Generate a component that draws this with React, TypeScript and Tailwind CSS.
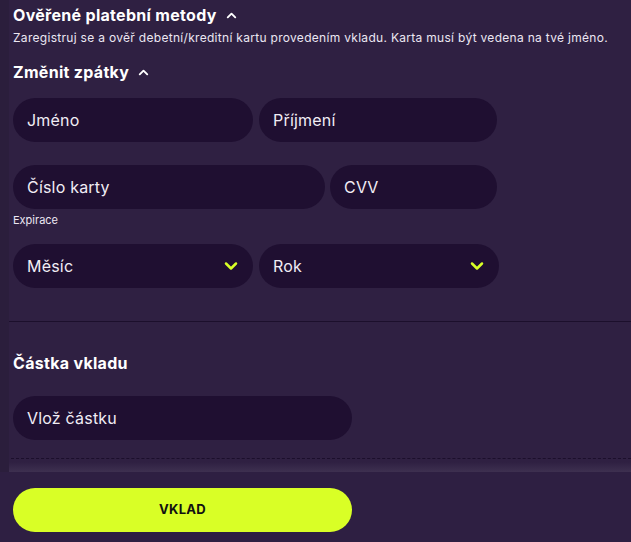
import { ChevronDown, ChevronUp } from 'lucide-react'

function Field({ label, className = '' }: { label: string; className?: string }) {
    return (
        <div className={`h-[44px] rounded-full bg-[#1f0f31] flex items-center pl-[14px] text-[16px] tracking-[0.2px] text-[#f1edf5] ${className}`}>
            {label}
        </div>
    )
}

function Select({ label }: { label: string }) {
    return (
        <div className="h-[44px] w-[240px] rounded-full bg-[#1f0f31] flex items-center justify-between pl-[14px] pr-[12px] text-[16px] tracking-[0.2px] text-[#f1edf5]">
            {label}
            <ChevronDown size={20} strokeWidth={3} className="text-[#d8ff26]" />
        </div>
    )
}

export default function App() {
    return (
        <div
            className="w-[631px] h-[542px] bg-[#2f2042] flex flex-col overflow-hidden text-white"
            style={{ fontFamily: 'Inter, "Noto Sans", sans-serif' }}
        >
            <div className="flex flex-1 min-h-0">
                {/* slightly darker edge of the scroll panel */}
                <div className="w-[9px] bg-[#2b1e3c]" />
                <div className="flex-1 flex flex-col">
                    <div className="pl-[4px] pt-[5px]">
                        <h3 className="flex items-center gap-[7px] text-[16px] font-bold leading-[20px] tracking-[0.3px]">
                            Ověřené platební metody
                            <ChevronUp size={15} strokeWidth={3} />
                        </h3>
                        <p className="mt-[6px] text-[12px] leading-[14px] tracking-[0.3px] text-[#ece7f2]">
                            Zaregistruj se a ověř debetní/kreditní kartu provedením vkladu. Karta musí být vedena na tvé jméno.
                        </p>
                        <h3 className="mt-[17px] flex items-center gap-[7px] text-[16px] font-bold leading-[20px] tracking-[0.3px]">
                            Změnit zpátky
                            <ChevronUp size={15} strokeWidth={3} />
                        </h3>

                        <div className="mt-[16px] flex gap-[6px]">
                            <Field label="Jméno" className="w-[240px]" />
                            <Field label="Příjmení" className="w-[238px]" />
                        </div>
                        <div className="mt-[23px] flex gap-[5px]">
                            <Field label="Číslo karty" className="w-[312px]" />
                            <Field label="CVV" className="w-[167px]" />
                        </div>
                        <p className="mt-[4px] text-[11px] leading-[14px] text-[#ece7f2]">Expirace</p>
                        <div className="mt-[17px] flex gap-[6px]">
                            <Select label="Měsíc" />
                            <Select label="Rok" />
                        </div>
                    </div>

                    <div className="mt-[33px] border-t border-[#1c0f2c]" />

                    <div className="pl-[4px]">
                        <h3 className="mt-[31px] text-[16px] font-bold leading-[20px] tracking-[0.3px]">Částka vkladu</h3>
                        <Field label="Vlož částku" className="mt-[23px] w-[339px]" />
                    </div>

                    <div className="mt-[18px] ml-[2px] border-t border-dashed border-[#1c0f2c]" />
                    <div className="mt-[3px] h-[10px] bg-gradient-to-b from-[#2f2042] to-[#3e3050]" />
                </div>
            </div>

            <div className="h-[70px] shrink-0 bg-[#2e1f42] pl-[13px] pt-[16px]">
                <button className="w-[339px] h-[44px] rounded-full bg-[#d9ff26] text-[13px] font-bold text-[#111] tracking-[0.3px]">
                    VKLAD
                </button>
            </div>
        </div>
    )
}
